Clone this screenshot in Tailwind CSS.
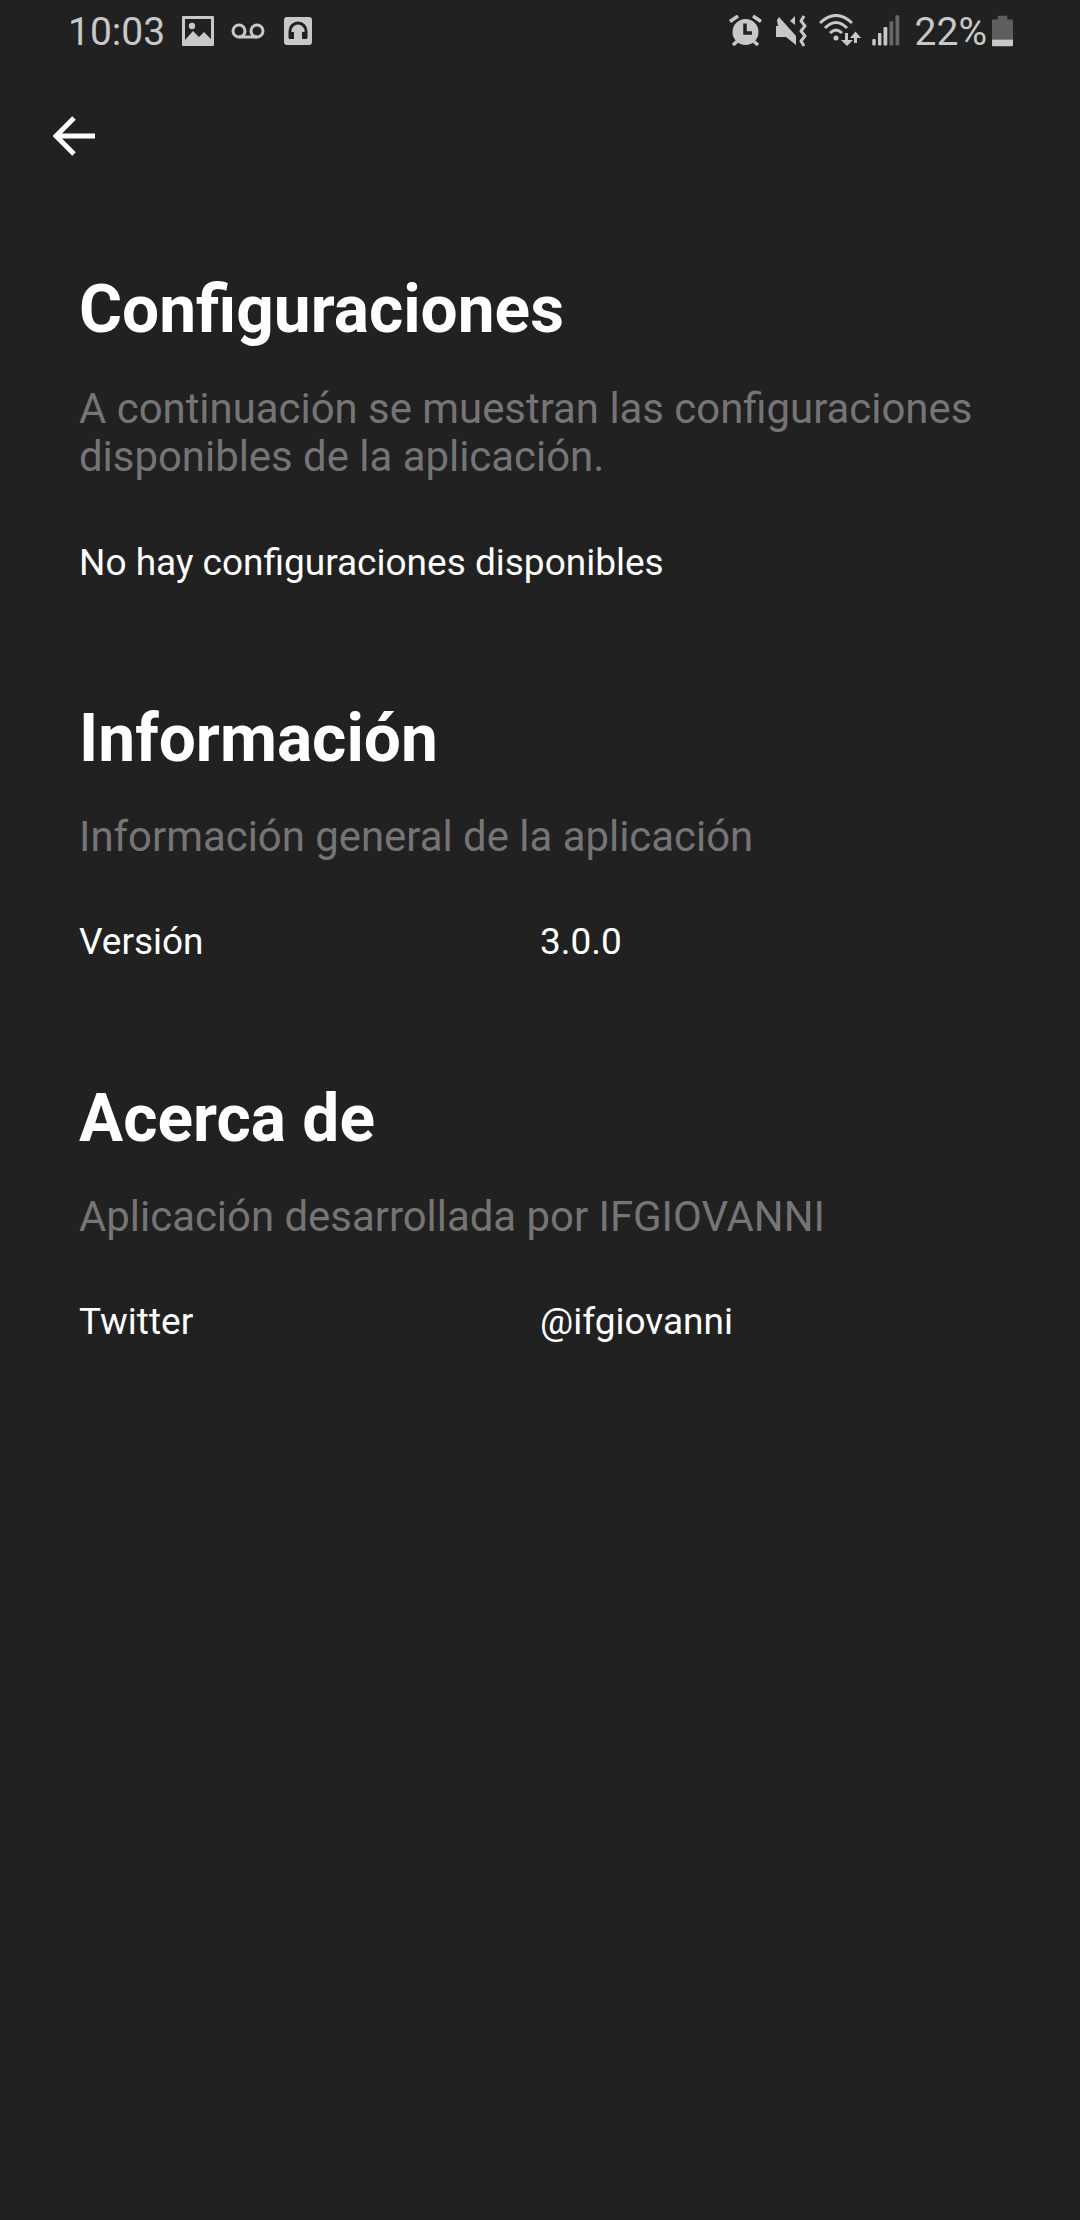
<!DOCTYPE html>
<html lang="en">
<head>
    <meta charset="UTF-8">
    <meta name="viewport" content="width=device-width, initial-scale=1.0">
    <script src="https://cdn.jsdelivr.net/npm/@tailwindcss/browser@4"></script>
    <title>Configuraciones</title>
</head>
<body class="bg-[#212121] font-['Roboto',sans-serif] w-[1080px] h-[2220px] overflow-hidden">
    <!-- status bar -->
    <div class="h-[64px] flex items-center justify-between pl-[68px] pr-[67px] text-[#c8c8c8]">
        <div class="flex items-center">
            <span class="text-[39px] leading-none">10:03</span>
            <svg class="ml-[17px] mb-[3px]" width="32" height="30" viewBox="0 0 32 30"><path fill="#c8c8c8" fill-rule="evenodd" d="M1 0h30a1 1 0 0 1 1 1v28a1 1 0 0 1-1 1H1a1 1 0 0 1-1-1V1a1 1 0 0 1 1-1zm2 3v21l8-9 6 6 5-5 7 7V3z"/><circle cx="10" cy="10" r="3.2" fill="#c8c8c8"/></svg>
            <svg class="ml-[17px] mb-[3px]" width="34" height="16" viewBox="0 0 34 16"><g fill="none" stroke="#c8c8c8" stroke-width="3"><circle cx="8" cy="8" r="6"/><circle cx="26" cy="8" r="6"/><path d="M8 14h18"/></g></svg>
            <svg class="ml-[19px] mb-[3px]" width="28" height="28" viewBox="0 0 28 28"><rect width="28" height="28" rx="3" fill="#c8c8c8"/><path fill="none" stroke="#212121" stroke-width="3" d="M6 21v-7a8 8 0 0 1 16 0v7"/><rect x="5" y="15" width="5" height="7" fill="#212121"/><rect x="18" y="15" width="5" height="7" fill="#212121"/></svg>
        </div>
        <div class="flex items-center">
            <svg class="mb-[3px]" width="33" height="31" viewBox="0 0 33 31"><circle cx="16.500" cy="17" r="13" fill="#c8c8c8"/><path d="M16 8.500v9.500h7" fill="none" stroke="#212121" stroke-width="3.500"/><path d="M1 6.500L9 1M32 6.500L24 1M4 30l4-3.500M29 30l-4-3.500" stroke="#c8c8c8" stroke-width="3.500"/></svg>
            <svg class="ml-[13px] mb-[3px]" width="32" height="32" viewBox="0 0 32 32"><path fill="#c8c8c8" d="M1 11h2L2 5l2-3 17 19v9L11 22H1zM20 1v9l-5-4z"/><path d="M29 1l-3 5 4 5-4 5 4 5-4 5 3 5" fill="none" stroke="#c8c8c8" stroke-width="3" stroke-linejoin="round"/></svg>
            <svg class="ml-[12px] mb-[3px]" width="42" height="34" viewBox="0 0 42 34"><g fill="none" stroke="#c8c8c8" stroke-width="3"><path d="M1 9Q17 -6 33 9"/><path d="M6 14Q17 3 28 14"/><path d="M11 19Q17 13 23 19"/></g><circle cx="17" cy="24" r="2.500" fill="#c8c8c8"/><path fill="#c8c8c8" d="M26 19h3v7h5l-6 6-6-6h4zM35 29v-5h-4l5.500-6.500 5.500 6.500h-4v5z"/></svg>
            <svg class="ml-[11px] mb-[3px]" width="28" height="31" viewBox="0 0 28 31"><rect x="0.300" y="24" width="3.400" height="6.500" rx="1" fill="#c8c8c8"/><rect x="6" y="18" width="3.400" height="12.500" rx="1" fill="#c8c8c8"/><rect x="11.500" y="12" width="3.800" height="18.500" rx="1" fill="#c8c8c8"/><rect x="17.500" y="6.300" width="3.800" height="24.200" rx="1" fill="#666"/><rect x="23.500" y="0.300" width="3.800" height="30.200" rx="1" fill="#666"/></svg>
            <span class="ml-[15px] text-[39px] leading-none">22%</span>
            <svg class="ml-[5px] mb-[3px]" width="21" height="32" viewBox="0 0 22 32"><path fill="#5e5e5e" d="M6 0h10v4h5a1 1 0 0 1 1 1v20H0V5a1 1 0 0 1 1-1h5z"/><path fill="#c8c8c8" d="M0 25h22v6a1 1 0 0 1-1 1H1a1 1 0 0 1-1-1z"/></svg>
        </div>
    </div>

    <!-- back arrow -->
    <div class="mt-[52px] ml-[53px]">
        <svg class="block" width="42" height="40" viewBox="0 0 42 40"><path d="M42 20H4M21 2L3 20l18 18" fill="none" stroke="#fff" stroke-width="5"/></svg>
    </div>

    <main class="px-[79px] mt-[114px]">
        <section>
            <h1 class="text-[65.8px] leading-[80px] font-bold text-white">Configuraciones</h1>
            <p class="mt-[35px] text-[41.9px] leading-[48px] text-[#757575]">A continuación se muestran las configuraciones disponibles de la aplicación.</p>
            <p class="mt-[58px] text-[37px] leading-[48px] text-white">No hay configuraciones disponibles</p>
        </section>
        <section class="mt-[112px]">
            <h1 class="text-[65.8px] leading-[80px] font-bold text-white">Información</h1>
            <p class="mt-[34px] text-[41.9px] leading-[48px] text-[#757575]">Información general de la aplicación</p>
            <div class="mt-[57px] grid grid-cols-2 text-[37px] leading-[48px] text-white">
                <span>Versión</span>
                <span>3.0.0</span>
            </div>
        </section>
        <section class="mt-[113px]">
            <h1 class="text-[65.8px] leading-[80px] font-bold text-white">Acerca de</h1>
            <p class="mt-[34px] text-[41.9px] leading-[48px] text-[#757575]">Aplicación desarrollada por IFGIOVANNI</p>
            <div class="mt-[57px] grid grid-cols-2 text-[37px] leading-[48px] text-white">
                <span>Twitter</span>
                <span>@ifgiovanni</span>
            </div>
        </section>
    </main>
</body>
</html>
